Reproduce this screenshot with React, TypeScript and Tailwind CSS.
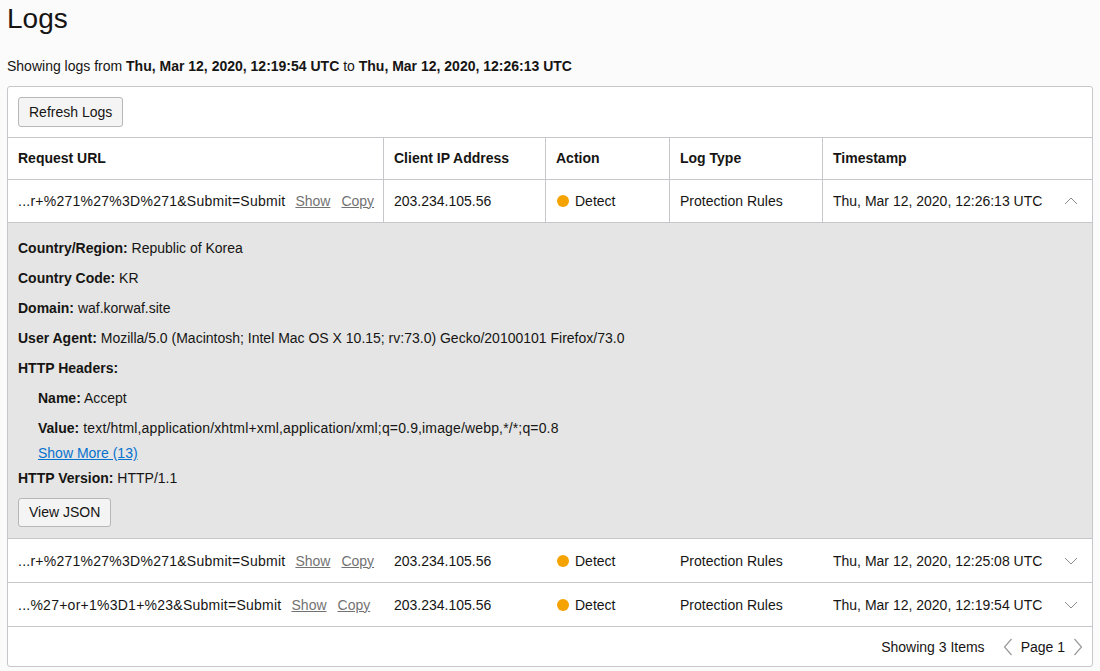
type Row = {
  url: string;
  ip: string;
  time: string;
  open: boolean;
  h: string;
};

const rows: Row[] = [
  { url: "...r+%271%27%3D%271&Submit=Submit", ip: "203.234.105.56", time: "Thu, Mar 12, 2020, 12:26:13 UTC", open: true, h: "h-[43px]" },
  { url: "...r+%271%27%3D%271&Submit=Submit", ip: "203.234.105.56", time: "Thu, Mar 12, 2020, 12:25:08 UTC", open: false, h: "h-[44px] pt-px" },
  { url: "...%27+or+1%3D1+%23&Submit=Submit", ip: "203.234.105.56", time: "Thu, Mar 12, 2020, 12:19:54 UTC", open: false, h: "h-[44px] pt-px" },
];

function Chevron({ up }: { up: boolean }) {
  return (
    <svg width="14" height="8" viewBox="0 0 14 8" className="text-[#8b8b8b]">
      <polyline
        points={up ? "1,7 7,1 13,7" : "1,1 7,7 13,1"}
        fill="none"
        stroke="currentColor"
        strokeWidth="1"
      />
    </svg>
  );
}

function PageArrow({ right }: { right?: boolean }) {
  return (
    <svg width="10" height="18" viewBox="0 0 10 18" className="text-[#9a9a9a]">
      <polyline
        points={right ? "1.5,1 8.5,9 1.5,17" : "8.5,1 1.5,9 8.5,17"}
        fill="none"
        stroke="currentColor"
        strokeWidth="1.2"
      />
    </svg>
  );
}

function Field({ label, value, indent, wide }: { label: string; value?: string; indent?: boolean; wide?: boolean }) {
  return (
    <div className={`h-5 leading-5 whitespace-nowrap ${indent ? "pl-5" : ""}`}>
      <span className="font-bold">{label}</span>
      {value ? <span className={wide ? "tracking-[0.15px]" : ""}> {value}</span> : null}
    </div>
  );
}

function Details() {
  return (
    <div className="border-t border-[#c5c7ca] bg-[#e5e5e5] px-[10px] pt-[15px] pb-[11px]">
      <div className="flex flex-col gap-[10px]">
        <Field label="Country/Region:" value="Republic of Korea" />
        <Field label="Country Code:" value="KR" />
        <Field label="Domain:" value="waf.korwaf.site" />
        <Field label="User Agent:" value="Mozilla/5.0 (Macintosh; Intel Mac OS X 10.15; rv:73.0) Gecko/20100101 Firefox/73.0" />
        <Field label="HTTP Headers:" />
        <Field label="Name:" value="Accept" indent />
        <Field label="Value:" value="text/html,application/xhtml+xml,application/xml;q=0.9,image/webp,*/*;q=0.8" indent wide />
      </div>
      <div className="mt-[5px] h-5 pl-5 leading-5">
        <a className="text-[#0572ce] underline">Show More (13)</a>
      </div>
      <div className="mt-[5px]">
        <Field label="HTTP Version:" value="HTTP/1.1" />
      </div>
      <button className="mt-[10px] h-[29px] rounded-[3px] border border-[#b7b7b7] bg-[#f4f4f4] px-[10px] text-[14px] text-[#161513]">
        View JSON
      </button>
    </div>
  );
}

export default function App() {
  return (
    <div className="min-h-[671px] bg-[#fbfbfb] px-[7px] pt-[2px] text-[14px] text-[#161513] font-['Liberation_Sans',Arial,sans-serif]">
      <h1 className="text-[28px] leading-[34px] font-normal">Logs</h1>
      <p className="mt-5 leading-5">
        Showing logs from <b>Thu, Mar 12, 2020, 12:19:54 UTC</b> to{" "}
        <b>Thu, Mar 12, 2020, 12:26:13 UTC</b>
      </p>

      <div className="mt-[10px] w-[1086px] rounded-[3px] border border-[#c5c7ca] bg-white">
        {/* toolbar */}
        <div className="h-[50px] p-[10px]">
          <button className="h-[30px] rounded-[3px] border border-[#b7b7b7] bg-[#f4f4f4] px-[10px] text-[14px] text-[#161513]">
            Refresh Logs
          </button>
        </div>

        {/* header */}
        <div className="grid h-[42px] grid-cols-[375px_162px_124px_153px_1fr] border-t border-[#c5c7ca] font-bold">
          <div className="flex items-center px-[10px]">Request URL</div>
          <div className="flex items-center border-l border-[#c5c7ca] px-[10px]">Client IP Address</div>
          <div className="flex items-center border-l border-[#c5c7ca] px-[10px]">Action</div>
          <div className="flex items-center border-l border-[#c5c7ca] px-[10px]">Log Type</div>
          <div className="flex items-center border-l border-[#c5c7ca] px-[10px]">Timestamp</div>
        </div>

        {rows.map((r, i) => {
          const sep = r.open ? "border-l border-[#c5c7ca]" : "border-l border-transparent";
          return (
            <div key={i}>
              <div className={`grid ${r.h} grid-cols-[375px_162px_124px_153px_1fr] border-t border-[#c5c7ca]`}>
                <div className="flex items-center px-[10px] whitespace-nowrap">
                  <span className="tracking-[0.25px]">{r.url}</span>
                  <a className="ml-[10px] text-[#737373] underline">Show</a>
                  <a className="ml-[11px] text-[#737373] underline">Copy</a>
                </div>
                <div className={`flex items-center px-[10px] ${sep}`}>{r.ip}</div>
                <div className={`flex items-center gap-[6px] px-[11px] ${sep}`}>
                  <span className="h-3 w-3 rounded-full bg-[#f5a300]" />
                  <span>Detect</span>
                </div>
                <div className={`flex items-center px-[10px] ${sep}`}>Protection Rules</div>
                <div className={`flex items-center justify-between pl-[10px] pr-[14px] ${sep}`}>
                  <span>{r.time}</span>
                  <Chevron up={r.open} />
                </div>
              </div>
              {r.open ? <Details /> : null}
            </div>
          );
        })}

        {/* footer */}
        <div className="flex h-[40px] items-center justify-end border-t border-[#c5c7ca] pt-px pr-[9px]">
          <span>Showing 3 Items</span>
          <span className="ml-[18px]">
            <PageArrow />
          </span>
          <span className="ml-[8px]">Page 1</span>
          <span className="ml-[8px]">
            <PageArrow right />
          </span>
        </div>
      </div>
    </div>
  );
}
